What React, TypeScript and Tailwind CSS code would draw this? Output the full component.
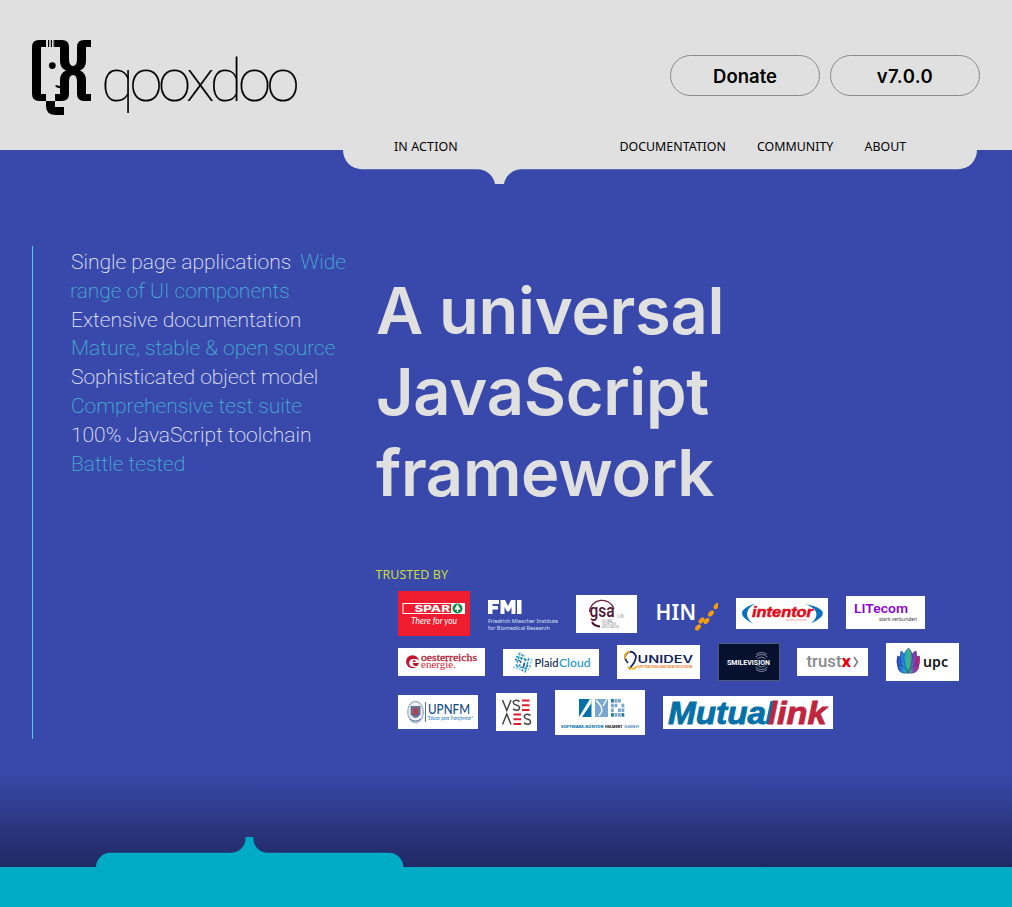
import type { ReactNode } from "react";

const ROBOTO = "font-[Roboto,sans-serif]";
const INTER = "font-[Inter,sans-serif]";
const NOTO = "font-['Noto_Sans',sans-serif]";

type TProps = {
  x: number;
  y: number;
  w: number;
  size: number;
  fill: string;
  weight?: number;
  family?: string;
  italic?: boolean;
  stroke?: number;
  children: ReactNode;
};

function T({ x, y, w, size, fill, weight = 400, family = "Noto Sans, sans-serif", italic, stroke, children }: TProps) {
  return (
    <text
      x={x}
      y={y}
      textLength={w}
      lengthAdjust="spacingAndGlyphs"
      fontSize={size}
      fontWeight={weight}
      fontFamily={family}
      fontStyle={italic ? "italic" : "normal"}
      fill={fill}
      stroke={stroke ? fill : undefined}
      strokeWidth={stroke}
    >
      {children}
    </text>
  );
}

function Logo({ w, h, bg, nudge = "", children }: { w: number; h: number; bg?: string; nudge?: string; children: ReactNode }) {
  return (
    <svg width={w} height={h} viewBox={`0 0 ${w} ${h}`} className={`block shrink-0 ${nudge}`}>
      {bg && <rect width={w} height={h} fill={bg} />}
      {children}
    </svg>
  );
}

function Brand() {
  return (
    <svg width="270" height="80" viewBox="0 0 270 80" className="block">
      <path d="M14 0H7Q0 0 0 7V54Q0 61 7 61H14V54H9V7H14Z" />
      <path d="M16.6 0v7M19.4 0v7M22.2 0v7" stroke="#000" strokeWidth="1.2" />
      <circle cx="20.3" cy="25.6" r="3.4" />
      <path d="M23 0H30Q37 0 37 7V19Q37 26 41 26Q45 26 45 19V7Q45 0 52 0H59V7H54V21Q54 28 48 30.500Q54 33 54 40V54H59V61H52Q45 61 45 54V42Q45 35 41 35Q37 35 37 42V54Q37 61 30 61H23V54H28V48Q25 48 23.500 46.500V45L28 46V40Q28 33 34 30.500Q28 28 28 21V7H23Z" />
      <path d="M14 61H23V67H32V75H24Q14 75 14 66Z" />
      <text x="69" y="61" fontFamily="Roboto, sans-serif" fontWeight="100" fontSize="60" letterSpacing="-4.450" stroke="#000" strokeWidth="0.150">
        qooxdoo
      </text>
    </svg>
  );
}

function Spar() {
  return (
    <Logo w={72} h={45} bg="#ee1c2e">
      <rect x="5" y="12.500" width="61.500" height="10" fill="none" stroke="#fff" />
      <rect x="53" y="12" width="14" height="11" fill="#fff" />
      <circle cx="59.500" cy="17.500" r="5" fill="#0a8a43" />
      <path d="M59.500 13l3.200 5.500h-2.500v2.500h-1.400v-2.500h-2.500z" fill="#fff" />
      <T x={16.500} y={20.500} w={35.500} size={8.5} fill="#fff" weight={800} family="Inter, sans-serif">SPAR</T>
      <T x={13} y={33} w={46} size={9} fill="#fff" italic family="Lato, sans-serif">There for you</T>
    </Logo>
  );
}

function Fmi() {
  return (
    <Logo w={70} h={38}>
      <path d="M0 5h11v4H4.500v2H10v3.500H4.500V19H0zM12.500 5H17l3 6 3-6h4.500v14H23.500v-7l-2.500 4.500h-2L16.500 12v7h-4zM29 5h4.500v14H29z" fill="#fff" />
      <T x={0} y={28} w={70} size={5.5} fill="#dfe3f7">Friedrich Miescher Institute</T>
      <T x={0} y={35} w={62} size={5.5} fill="#dfe3f7">for Biomedical Research</T>
    </Logo>
  );
}

function Gsa() {
  return (
    <Logo w={61} h={38} bg="#fff">
      <path d="M13.500 17A12.500 12 0 0 1 38 14" fill="none" stroke="#69203f" strokeWidth="1.200" />
      <path d="M16 27q2 4 8 4.500" fill="none" stroke="#4f1230" strokeWidth="2" />
      <T x={13.5} y={22} w={25} size={18} fill="#4f1230" weight={500} family="Roboto, sans-serif">gsa</T>
      <T x={41} y={22.5} w={7.5} size={5} fill="#999">UK</T>
      <T x={26} y={27} w={11} size={3} fill="#888">GLOBAL</T>
      <T x={26} y={29.7} w={14} size={3} fill="#888">SOURCING</T>
      <T x={26} y={32.5} w={17} size={3} fill="#888">ASSOCIATION</T>
    </Logo>
  );
}

function Hin() {
  return (
    <Logo w={63} h={38}>
      <g fill="none" stroke="#fff" strokeWidth="0">
        <text x="0.500" y="24.500" fontFamily="Noto Sans, sans-serif" fontWeight="600" fontSize="22" fill="#fff" letterSpacing="0.300" textLength="41" lengthAdjust="spacingAndGlyphs">HIN</text>
      </g>
      <g fill="#f59c0c">
        {[[61.500, 11], [56, 18.500], [51.500, 26], [46.500, 25.500], [43, 32.500]].map(([x, y]) => (
          <ellipse key={`${x}-${y}`} cx={x} cy={y} rx="3.600" ry="2.200" transform={`rotate(-50 ${x} ${y})`} />
        ))}
      </g>
    </Logo>
  );
}

function Intentor() {
  return (
    <Logo w={92} h={31} bg="#fff">
      <path d="M19 5.500Q-6 14 17 25.500Q4 15 19 5.500Z" fill="#0871bd" />
      <path d="M70 6Q101 13 75 25.500Q88 14 70 6Z" fill="#0871bd" />
      <T x={16} y={19} w={61} size={14.500} fill="#e20b19" weight={700} stroke={0.500} italic family="Liberation Sans, sans-serif">intentor</T>
      <T x={50} y={22.5} w={21} size={3} fill="#e67b83">mobile solutions</T>
    </Logo>
  );
}

function Litecom() {
  return (
    <Logo w={79} h={33} bg="#fff" nudge="-mt-0.5">
      <T x={8} y={16.500} w={54} size={12.500} fill="#8b05cb" weight={600} family="Roboto, sans-serif">LITecom</T>
      <T x={33} y={25} w={38} size={5.8} fill="#333">stark verbunden</T>
    </Logo>
  );
}

function Oesterreichs() {
  return (
    <Logo w={87} h={28} bg="#fff">
      <circle cx="14.500" cy="13.700" r="6.500" fill="#bd1730" />
      <T x={10.5} y={18.5} w={11} size={16} fill="#fff" weight={700} family="Liberation Serif, serif">e</T>
      <T x={23} y={13} w={56} size={11} fill="#b31e34" stroke={0.300} family="Liberation Serif, serif">oesterreichs</T>
      <T x={23} y={19.5} w={35} size={11} fill="#dc2335" family="Liberation Serif, serif">energie.</T>
    </Logo>
  );
}

function PlaidCloud() {
  return (
    <Logo w={96} h={27} bg="#fff" nudge="mt-0.5">
      <g transform="translate(19.500 13.500) rotate(15)" fill="none" strokeWidth="1.500">
        <path d="M-5-9v14M-8-4H5M5-6V9M-5 5H8" stroke="#1ba0cd" strokeDasharray="3 1" />
        <path d="M-2-8v12M-8-1H-1M2-4V9M1 2H9" stroke="#276092" strokeDasharray="2 1.500" />
        <path d="M-7-7h8M-8 7H2M8-6v8" stroke="#8ec4de" strokeDasharray="2 1" />
      </g>
      <T x={31.500} y={17.500} w={24} size={12} fill="#10264c" weight={500} family="Lato, sans-serif">Plaid</T>
      <T x={56} y={17.500} w={31.500} size={12} fill="#2494c2" weight={500} family="Lato, sans-serif">Cloud</T>
    </Logo>
  );
}

function Unidev() {
  return (
    <Logo w={83} h={34} bg="#fff">
      <path d="M11 18Q5 11 11 7.500Q16 5 19 11Q19 17 12 24" fill="none" stroke="#19286b" strokeWidth="1.800" />
      <path d="M8.500 14Q6 8 13 6.700M10.500 22q7 4 9-1" fill="none" stroke="#efb61b" strokeWidth="1.800" />
      <T x={20.500} y={18} w={55.500} size={9.800} fill="#12245c" weight={600} family="Inter, sans-serif">UNIDEV</T>
      <T x={20.5} y={23} w={55} size={3.8} fill="#ed7c25" weight={700}>GPS TRACKING AND M2M SOLUTIONS</T>
    </Logo>
  );
}

function SmileVision() {
  return (
    <Logo w={62} h={38} bg="#06112f" nudge="-mr-px">
      <rect x="0.500" y="0.500" width="61" height="37" fill="none" stroke="#515a78" />
      <g fill="none" stroke="#a0a6b8" strokeWidth="0.800">
        <path d="M37.500 14q6-5 12 0M39.500 15.500q4-3 8 0M38 11.500q5.500-4 11 0M37.500 24q6 5 12 0M39.500 22.500q4 3 8 0M38 26.500q5.500 4 11 0" />
      </g>
      <T x={9} y={21.500} w={43} size={6.500} fill="#fff" weight={700} family="Roboto, sans-serif">SMILEVISION</T>
    </Logo>
  );
}

function TrustX() {
  return (
    <Logo w={71} h={28} bg="#fff">
      <T x={9.5} y={19} w={35} size={16} fill="#888a8c" weight={500} family="Roboto, sans-serif">trust</T>
      <T x={44.5} y={19} w={9.500} size={16} fill="#e30613" weight={800} family="Roboto, sans-serif">x</T>
      <path d="M57 9l3.500 5-3.500 5" fill="none" stroke="#77797b" strokeWidth="1.500" />
    </Logo>
  );
}

function Upc() {
  return (
    <Logo w={73} h={38} bg="#fff">
      <defs>
        <linearGradient id="upc-petals" gradientUnits="userSpaceOnUse" x1="11" y1="0" x2="34" y2="0">
          <stop stopColor="#2c45b8" />
          <stop offset=".3" stopColor="#2497e1" />
          <stop offset=".52" stopColor="#36bd7c" />
          <stop offset=".75" stopColor="#823ac0" />
          <stop offset="1" stopColor="#e21c45" />
        </linearGradient>
      </defs>
      <g fill="url(#upc-petals)" stroke="#1d3580" strokeWidth="0.500">
        <path d="M22 30Q8 27 11.500 13Q17 13 22 30Q27 13 33.500 13Q36 27 22 30Z" />
        <path d="M22 30Q11 22 15 8Q20 9 22 30Q24 9 30 8Q34 22 22 30Z" />
        <path d="M22 30Q13 12 22.500 5Q31 12 22 30Z" />
        <path d="M22 30Q12 32 11.500 22Q18 21 22 30Q26 21 33 22Q32 32 22 30Z" />
      </g>
      <T x={37} y={23.5} w={25} size={14.500} fill="#151515" weight={600} family="Noto Sans, sans-serif">upc</T>
    </Logo>
  );
}

function Upnfm() {
  return (
    <Logo w={80} h={34} bg="#fff" nudge="-mt-px">
      <ellipse cx="17.500" cy="17" rx="7.700" ry="10.500" fill="#edf0f4" stroke="#95a1b4" strokeWidth="1.400" strokeDasharray="2 .5" />
      <path d="M13 11.500h9v8q-4.500 6-9 0z" fill="#667a9f" stroke="#38455e" strokeWidth=".6" />
      <path d="M15 13h5v7h-5z" fill="#a94351" />
      <path d="M12 24q5 4 11 0" fill="none" stroke="#5478b1" />
      <path d="M27.500 7v20" stroke="#4277ad" strokeWidth="1" />
      <T x={30} y={18.500} w={42} size={13} fill="#134c86" weight={500} family="Lato, sans-serif">UPNFM</T>
      <T x={29} y={24.5} w={46} size={4.500} fill="#317eb8" weight={500} italic>"Educar para Transformar"</T>
    </Logo>
  );
}

function VseAes() {
  return (
    <Logo w={41} h={38} bg="#fff" nudge="-mt-px">
      <g fill="none" stroke="#444" strokeWidth="1.500">
        <path d="M6.500 7l4.300 10.500L15 7M6.500 31.500L10.800 21 15 31.500" />
        <path d="M23.500 8.500q-4-2.500-6 0-1 2.500 2.800 3.600 4 1 3 3.900-2 2.600-6.300 0M34.500 22.500q-4-2.500-6 0-1 2.500 2.800 3.600 4 1 3 3.900-2 2.600-6.300 0" />
      </g>
      <path d="M26 7.500h7.500M26 12.300h7.500M26 17h7.500M17.500 21.500H25M17.500 26.200H25M17.500 31H25" stroke="#e31b2e" strokeWidth="1.900" />
    </Logo>
  );
}

const PIXELS: [number, number][] = [
  [0, 0], [1, 0], [2, 0], [0, 1], [1, 1], [3, 1], [0, 2], [2, 2], [3, 2], [0, 3], [1, 3], [2, 3], [3, 3],
];

function Helmert() {
  return (
    <Logo w={90} h={45} bg="#fff">
      <rect x="24" y="9" width="12.500" height="18" fill="#0671a9" />
      <path d="M24 27L35 9h1.500v4L27 27z" fill="#fff" />
      <rect x="40" y="9" width="13" height="18" fill="#79a7ce" />
      <path d="M41 10l5 6 1 5-3 5M52 9l-4 7" fill="none" stroke="#fff" strokeWidth="1.300" />
      {PIXELS.map(([c, r]) => (
        <rect key={`${c}-${r}`} x={56 + c * 3.5} y={9 + r * 4.7} width="2.800" height="3.600" fill={(c + r) % 3 ? "#79a7ce" : "#28799f"} />
      ))}
      <T x={6} y={38} w={42.500} size={4} fill="#0671a9" weight={800}>SOFTWARE-KONTOR</T>
      <T x={50} y={38} w={17.500} size={4} fill="#111" weight={800}>HELMERT</T>
      <T x={69} y={38} w={15} size={4} fill="#5f94bd" weight={700}>GMBH</T>
    </Logo>
  );
}

function Mutualink() {
  return (
    <Logo w={170} h={33} bg="#fff">
      <T x={5} y={28} w={98} size={32} fill="#0670a8" weight={700} stroke={0.900} italic family="Liberation Sans, sans-serif">Mutua</T>
      <T x={104.500} y={28} w={59} size={32} fill="#c0253e" weight={700} stroke={0.900} italic family="Liberation Sans, sans-serif">link</T>
      <path d="M102.500 28l5-23h2.800L105.300 28z" fill="#0670a8" />
    </Logo>
  );
}

const FEATURES = [
  "Extensive documentation",
  "Mature, stable & open source",
  "Sophisticated object model",
  "Comprehensive test suite",
  "100% JavaScript toolchain",
  "Battle tested",
];

export default function App() {
  return (
    <div className="flex h-[907px] w-full flex-col overflow-hidden bg-[#3949ab]">
      <header className="relative z-10 flex h-[150px] shrink-0 flex-col bg-[#e0e0e0]">
        <svg width="634" height="35" viewBox="0 0 634 35" className="absolute left-[343px] top-[149px]">
          <path d="M0 0H634V1A19 19 0 0 1 615 20.300H179A18 18 0 0 0 161 35H152A18 18 0 0 0 134 20.300H19A19 19 0 0 1 0 1Z" fill="#e0e0e0" />
        </svg>
        <div className="flex h-[137px] shrink-0 items-start justify-between px-8 pt-10">
          <Brand />
          <div className={`flex gap-2.5 pt-[15px] text-[18.5px] font-semibold text-black ${INTER}`}>
            <a className="flex h-[41px] w-[150px] items-center justify-center rounded-full border border-[#8a8a8a] pt-0.5">Donate</a>
            <a className="flex h-[41px] w-[150px] items-center justify-center rounded-full border border-[#8a8a8a] pt-0.5 tracking-[0.4px]">v7.0.0</a>
          </div>
        </div>
        <nav className={`relative flex h-5 shrink-0 items-center pl-[394px] text-[12.4px] leading-5 text-black ${NOTO}`}>
          <a className="w-[225.5px] tracking-[0.15px]">IN ACTION</a>
          <a className="w-[137.5px]">DOCUMENTATION</a>
          <a className="w-[107.5px]">COMMUNITY</a>
          <a>ABOUT</a>
        </nav>
      </header>

      <main className="flex h-[717px] shrink-0 bg-linear-to-b from-[#3949ab] from-[86.5%] to-[#212963] pl-8">
        <aside className={`mt-24 h-[493px] w-[343px] shrink-0 border-l border-[#4dd0e1] pl-[38px] pt-0.5 text-[21px] font-extralight leading-[28.8px] text-[#eceefa] ${ROBOTO}`}>
          <p className="-ml-px w-[290px]">
            <span className="pl-px">Single page applications</span>
            <span className="pl-1 text-[#45b5d1]"> Wide range of UI components</span>
          </p>
          <ul>
            {FEATURES.map((f, i) => (
              <li key={f} className={i % 2 ? "text-[#45b5d1]" : ""}>{f}</li>
            ))}
          </ul>
        </aside>
        <section className="flex-1">
          <h1 className={`mt-[120px] pl-px text-[65px] font-semibold leading-[81px] tracking-[-0.3px] text-[#e0e0e0] ${INTER}`}>
            A universal<br />JavaScript<br />framework
          </h1>
          <h2 className={`mt-[52px] pl-[0.5px] text-[12.4px] leading-5 tracking-[0.1px] text-[#cddc39] ${NOTO}`}>TRUSTED BY</h2>
          <div className="mt-1.5 flex flex-col pl-[23px]">
            <div className="flex h-[45px] items-center gap-[18px]">
              <Spar /><Fmi /><Gsa /><Hin /><Intentor /><Litecom />
            </div>
            <div className="mt-[5px] flex h-[41px] items-center gap-[18px]">
              <Oesterreichs /><PlaidCloud /><Unidev /><SmileVision /><TrustX /><Upc />
            </div>
            <div className="mt-2 flex h-[45px] items-center gap-[18px]">
              <Upnfm /><VseAes /><Helmert /><Mutualink />
            </div>
          </div>
        </section>
      </main>

      <footer className="relative h-10 shrink-0 bg-[#00acc5]">
        <svg width="308" height="31" viewBox="0 0 308 31" className="absolute -top-[30px] left-[96px]">
          <path d="M0 31V30A14.500 14.500 0 0 1 14.500 15.700H136A14.500 14.500 0 0 0 149.500 0H157.300A14.500 14.500 0 0 0 171 15.700H293A14.500 14.500 0 0 1 307.300 30V31Z" fill="#00acc5" />
        </svg>
      </footer>
    </div>
  );
}
